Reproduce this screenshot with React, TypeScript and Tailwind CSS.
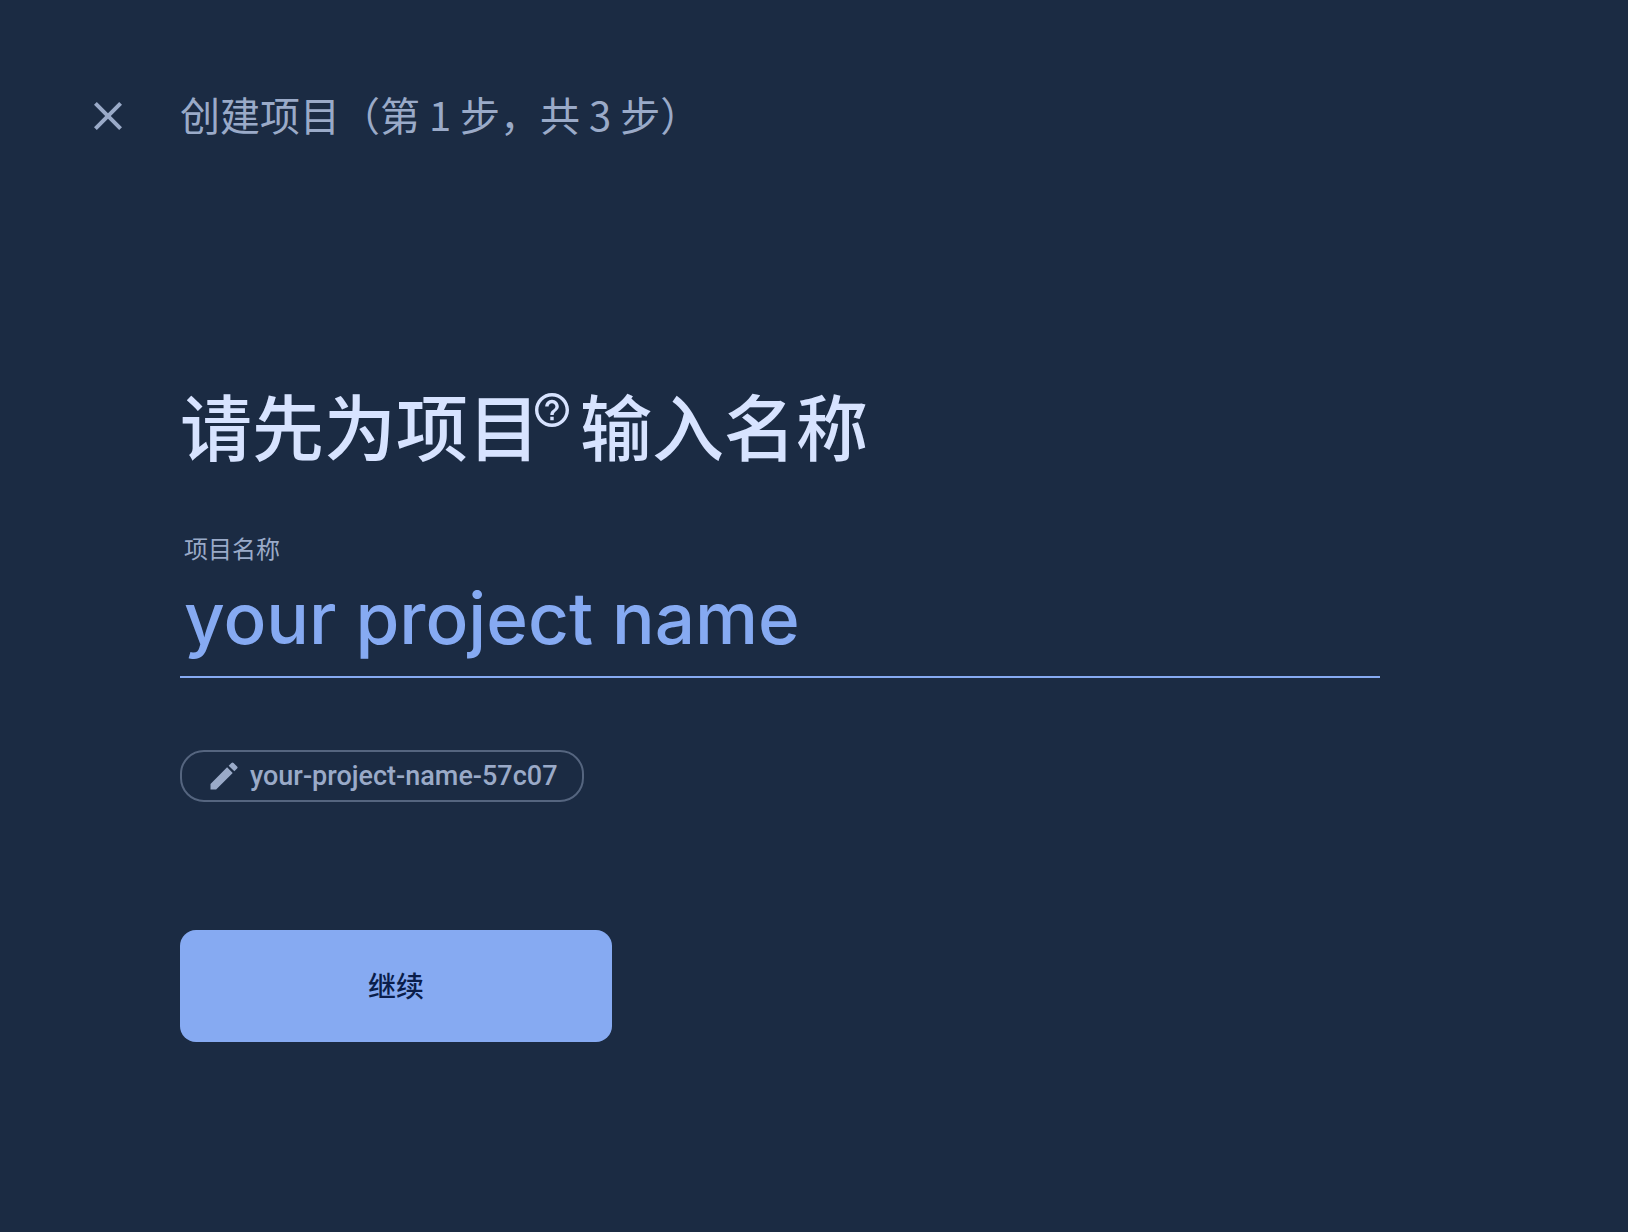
import { useState } from "react";
import { MdClose, MdEdit } from "react-icons/md";

function HelpIcon() {
  return (
    <svg viewBox="2 2 20 20" className="size-[34px]" fill="currentColor" aria-hidden="true">
      <path d="M11 18h2v-2h-2v2zm1-16C6.48 2 2 6.48 2 12s4.48 10 10 10 10-4.48 10-10S17.52 2 12 2zm0 18c-4.41 0-8-3.59-8-8s3.59-8 8-8 8 3.59 8 8-3.59 8-8 8zm0-14c-2.21 0-4 1.79-4 4h2c0-1.1.9-2 2-2s2 .9 2 2c0 2-3 1.75-3 5h2c0-2.25 3-2.5 3-5 0-2.21-1.79-4-4-4z" />
    </svg>
  );
}

export default function App() {
  const [name, setName] = useState("");

  return (
    <div className="min-h-screen bg-[#1b2b43] pt-[84px] pb-24 font-['Roboto','Noto_Sans_CJK_SC',sans-serif] text-[#9aaac8]">
      <header className="flex items-center gap-12 pl-[84px]">
        <button type="button" aria-label="关闭" className="mt-1 size-12">
          <MdClose className="size-12" />
        </button>
        <h1 className="font-['Noto_Sans_CJK_SC',sans-serif] text-[40px] leading-[60px]">
          创建项目（第 1 步，共 3 步）
        </h1>
      </header>

      <main className="mr-12 ml-[180px] max-w-[1200px] pt-[233px]">
        <h2 className="flex items-start text-[72px] leading-[108px] font-medium text-[#d7e3ff]">
          请先为项目
          <button type="button" aria-label="项目说明" className="mt-4 mr-[11px] -ml-[5px]">
            <HelpIcon />
          </button>
          输入名称
        </h2>

        <form onSubmit={(e) => e.preventDefault()}>
          <label htmlFor="project-name" className="mt-[47px] block pl-1 text-2xl leading-9">
            项目名称
          </label>
          <input
            id="project-name"
            type="text"
            value={name}
            onChange={(e) => setName(e.target.value)}
            placeholder="your project name"
            className="mt-2 block h-[102px] w-full border-b-2 border-[#86aaf2] bg-transparent pb-4 pl-1 font-['Inter',sans-serif] text-[71px] font-medium text-[#86aaf2] outline-none placeholder:text-[#86aaf2]"
          />

          <button
            type="button"
            className="mt-[72px] flex h-[52px] items-center gap-2 rounded-3xl border-2 border-[#55657f] px-6 text-[27px] font-medium"
          >
            <MdEdit className="size-9" />
            your-project-name-57c07
          </button>

          <button
            type="submit"
            className="mt-32 block h-28 w-[432px] rounded-2xl bg-[#86aaf2] pt-1 text-[28px] font-medium text-[#0a1d4a]"
          >
            继续
          </button>
        </form>
      </main>
    </div>
  );
}
